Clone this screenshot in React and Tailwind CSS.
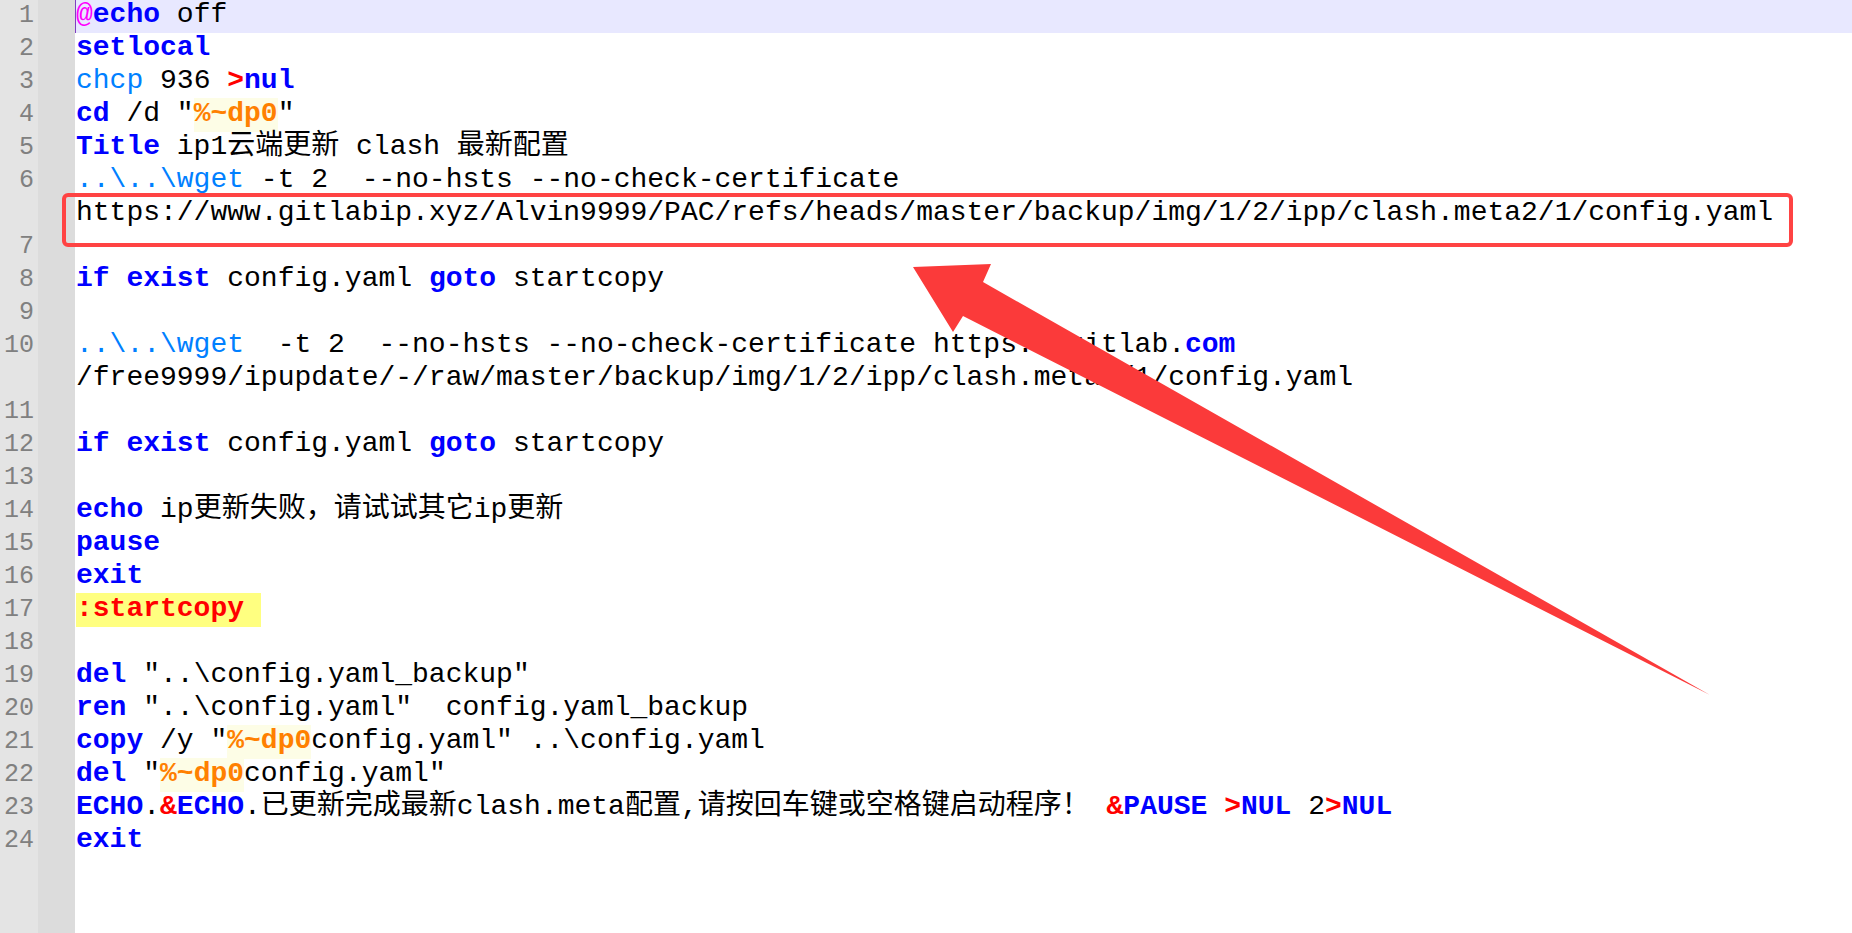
import React from "react";

const K = ({ children }) => <span className="font-bold text-[#0000ff]">{children}</span>;
const R = ({ children }) => <span className="font-bold text-[#ff0000]">{children}</span>;
const L = ({ children }) => <span className="text-[#0080ff]">{children}</span>;
const M = ({ children }) => <span className="text-[#ff00ff]">{children}</span>;
const V = ({ children }) => (
  <span className="font-bold text-[#ff8000] bg-[#fdfde6] pb-[3px]">{children}</span>
);

const rows = [
  { n: "1", hl: true, c: <><M>@</M><K>echo</K> off</> },
  { n: "2", c: <K>setlocal</K> },
  { n: "3", c: <><L>chcp</L> 936 <R>&gt;</R><K>nul</K></> },
  { n: "4", c: <><K>cd</K> /d "<V>%~dp0</V>"</> },
  { n: "5", c: <><K>Title</K> ip1云端更新 clash 最新配置</> },
  { n: "6", c: <><L>..\..\wget</L> -t 2  --no-hsts --no-check-certificate</> },
  { n: "", c: <>https://www.gitlabip.xyz/Alvin9999/PAC/refs/heads/master/backup/img/1/2/ipp/clash.meta2/1/config.yaml</> },
  { n: "7", c: null },
  { n: "8", c: <><K>if</K> <K>exist</K> config.yaml <K>goto</K> startcopy</> },
  { n: "9", c: null },
  { n: "10", c: <><L>..\..\wget</L>  -t 2  --no-hsts --no-check-certificate https://gitlab.<K>com</K></> },
  { n: "", c: <>/free9999/ipupdate/-/raw/master/backup/img/1/2/ipp/clash.meta2/1/config.yaml</> },
  { n: "11", c: null },
  { n: "12", c: <><K>if</K> <K>exist</K> config.yaml <K>goto</K> startcopy</> },
  { n: "13", c: null },
  { n: "14", c: <><K>echo</K> ip更新失败，请试试其它ip更新</> },
  { n: "15", c: <K>pause</K> },
  { n: "16", c: <K>exit</K> },
  { n: "17", c: <span className="font-bold text-[#ff0000] bg-[#ffff80] pb-[3px]">:startcopy </span> },
  { n: "18", c: null },
  { n: "19", c: <><K>del</K> "..\config.yaml_backup"</> },
  { n: "20", c: <><K>ren</K> "..\config.yaml"  config.yaml_backup</> },
  { n: "21", c: <><K>copy</K> /y "<V>%~dp0</V>config.yaml" ..\config.yaml</> },
  { n: "22", c: <><K>del</K> "<V>%~dp0</V>config.yaml"</> },
  { n: "23", c: <><K>ECHO</K>.<R>&amp;</R><K>ECHO</K>.已更新完成最新clash.meta配置,请按回车键或空格键启动程序！ <R>&amp;</R><K>PAUSE</K> <R>&gt;</R><K>NUL</K> 2<R>&gt;</R><K>NUL</K></> },
  { n: "24", c: <K>exit</K> },
];

export default function App() {
  return (
    <div className="relative w-[1852px] h-[933px] bg-white overflow-hidden flex font-['Liberation_Mono','Noto_Sans_CJK_SC',monospace] text-black">
      <div className="w-[38px] shrink-0 bg-[#e4e4e4] flex flex-col">
        {rows.map((r, i) => (
          <div key={i} className="h-[33px] shrink-0 text-right pr-[4px] text-[25px] leading-[31px] text-[#808080] whitespace-pre">
            {r.n}
          </div>
        ))}
      </div>
      <div className="w-[37px] shrink-0 bg-[#dcdcdc]" />
      <div className="flex-1 flex flex-col">
        {rows.map((r, i) => (
          <div
            key={i}
            className={
              r.hl
                ? "h-[33px] shrink-0 text-[28px] leading-[29px] whitespace-pre bg-[#e8e8ff] border-l border-[#8040c0]"
                : "h-[33px] shrink-0 text-[28px] leading-[29px] whitespace-pre pl-[1px]"
            }
          >
            {r.c}
          </div>
        ))}
      </div>
      <div className="absolute left-[62px] top-[193px] w-[1731px] h-[54px] border-[4px] border-[#ff4343] rounded-[6px] pointer-events-none" />
      <svg className="absolute inset-0 pointer-events-none" width="1852" height="933" viewBox="0 0 1852 933">
        <polygon
          points="913,267 991,264 983,282 1710,695 963,316 953,332"
          fill="#fb3a3a"
        />
      </svg>
    </div>
  );
}
